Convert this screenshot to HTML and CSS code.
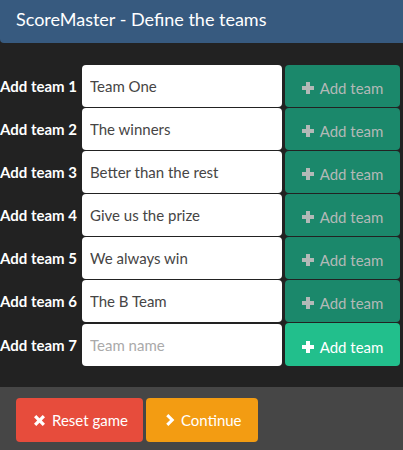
FILE: index.html
```html
<!DOCTYPE html>
<html>
<head>
<meta charset="utf-8">
<link rel="stylesheet" href="styles.css">
</head>
<body>
<div class="header">ScoreMaster - Define the teams</div>
<div class="teams">
  <div class="row"><label class="lbl">Add team 1</label><input class="inp" value="Team One"><button class="add disabled"><svg class="ic" viewBox="0 0 12 12"><path d="M4 0h4v4h4v4H8v4H4V8H0V4h4z"/></svg>Add team</button></div>
  <div class="row"><label class="lbl">Add team 2</label><input class="inp" value="The winners"><button class="add disabled"><svg class="ic" viewBox="0 0 12 12"><path d="M4 0h4v4h4v4H8v4H4V8H0V4h4z"/></svg>Add team</button></div>
  <div class="row"><label class="lbl">Add team 3</label><input class="inp" value="Better than the rest"><button class="add disabled"><svg class="ic" viewBox="0 0 12 12"><path d="M4 0h4v4h4v4H8v4H4V8H0V4h4z"/></svg>Add team</button></div>
  <div class="row"><label class="lbl">Add team 4</label><input class="inp" value="Give us the prize"><button class="add disabled"><svg class="ic" viewBox="0 0 12 12"><path d="M4 0h4v4h4v4H8v4H4V8H0V4h4z"/></svg>Add team</button></div>
  <div class="row"><label class="lbl">Add team 5</label><input class="inp" value="We always win"><button class="add disabled"><svg class="ic" viewBox="0 0 12 12"><path d="M4 0h4v4h4v4H8v4H4V8H0V4h4z"/></svg>Add team</button></div>
  <div class="row"><label class="lbl">Add team 6</label><input class="inp" value="The B Team"><button class="add disabled"><svg class="ic" viewBox="0 0 12 12"><path d="M4 0h4v4h4v4H8v4H4V8H0V4h4z"/></svg>Add team</button></div>
  <div class="row"><label class="lbl">Add team 7</label><input class="inp" placeholder="Team name"><button class="add active"><svg class="ic" viewBox="0 0 12 12"><path d="M4 0h4v4h4v4H8v4H4V8H0V4h4z"/></svg>Add team</button></div>
</div>
<div class="footer">
  <button class="fbtn reset"><svg class="ic2" viewBox="0 0 12 12"><path d="M2.5 0L6 3.5L9.5 0L12 2.5L8.5 6L12 9.5L9.5 12L6 8.5L2.5 12L0 9.5L3.5 6L0 2.5z"/></svg>Reset game</button>
  <button class="fbtn cont"><svg class="ic3" viewBox="0 0 10 14"><path d="M2.5 0L9.5 7L2.5 14L0 11.5L4.5 7L0 2.5z"/></svg>Continue</button>
</div>
</body>
</html>
```
FILE: styles.css
```css
html, body {
  margin: 0;
  padding: 0;
  background: #222222;
  font-family: Lato, "Open Sans", sans-serif;
  height: 100%;
  overflow: hidden;
}
body {
  display: flex;
  flex-direction: column;
}
.header {
  flex-shrink: 0;
  background: #375a7f;
  color: #ffffff;
  font-size: 18px;
  height: 43px;
  line-height: 39px;
  padding-left: 16px;
  box-sizing: border-box;
  border-bottom-left-radius: 4px;
}
.teams {
  flex-shrink: 0;
  padding-top: 22px;
  display: flex;
  flex-direction: column;
  gap: 1px;
}
.row {
  display: grid;
  grid-template-columns: 82px 200px 118px;
  align-items: center;
  height: 42px;
}
.lbl {
  color: #ffffff;
  font-weight: bold;
  font-size: 15px;
  white-space: nowrap;
}
.inp {
  height: 42px;
  box-sizing: border-box;
  border: none;
  border-radius: 4px;
  background: #ffffff;
  padding: 0 8px;
  font-family: Lato, sans-serif;
  font-size: 15px;
  color: #464545;
  outline: none;
}
.inp::placeholder {
  color: #aaaaaa;
}
.add {
  margin-left: 3px;
  height: 42px;
  border: none;
  border-radius: 4px;
  font-family: Lato, sans-serif;
  font-size: 15px;
  display: flex;
  align-items: center;
  justify-content: center;
  gap: 6px;
  padding: 4px 0 0 0;
}
.add.disabled {
  background: #1b886b;
  color: #b3b9b7;
}
.add.active {
  background: #22bf8c;
  color: #ffffff;
  height: 43px;
  align-self: start;
}
.ic {
  flex-shrink: 0;
  width: 12px;
  height: 12px;
  fill: currentColor;
}
.footer {
  margin-top: 22px;
  background: #464646;
  flex: 1 0 auto;
  padding: 11px 16px;
  display: flex;
  gap: 3px;
  align-items: flex-start;
}
.fbtn {
  flex-shrink: 0;
  height: 44px;
  border: none;
  border-radius: 4px;
  color: #ffffff;
  font-family: Lato, sans-serif;
  font-size: 15px;
  white-space: nowrap;
  display: flex;
  align-items: center;
  gap: 7px;
  padding: 0 0 0 18px;
}
.reset {
  background: #e74c3c;
  width: 127px;
}
.cont {
  background: #f39c12;
  width: 112px;
  padding-left: 20px;
  gap: 6px;
}
.ic2 {
  flex-shrink: 0;
  width: 11px;
  height: 11px;
  fill: #ffffff;
}
.ic3 {
  flex-shrink: 0;
  width: 9px;
  height: 12px;
  fill: #ffffff;
}
```
